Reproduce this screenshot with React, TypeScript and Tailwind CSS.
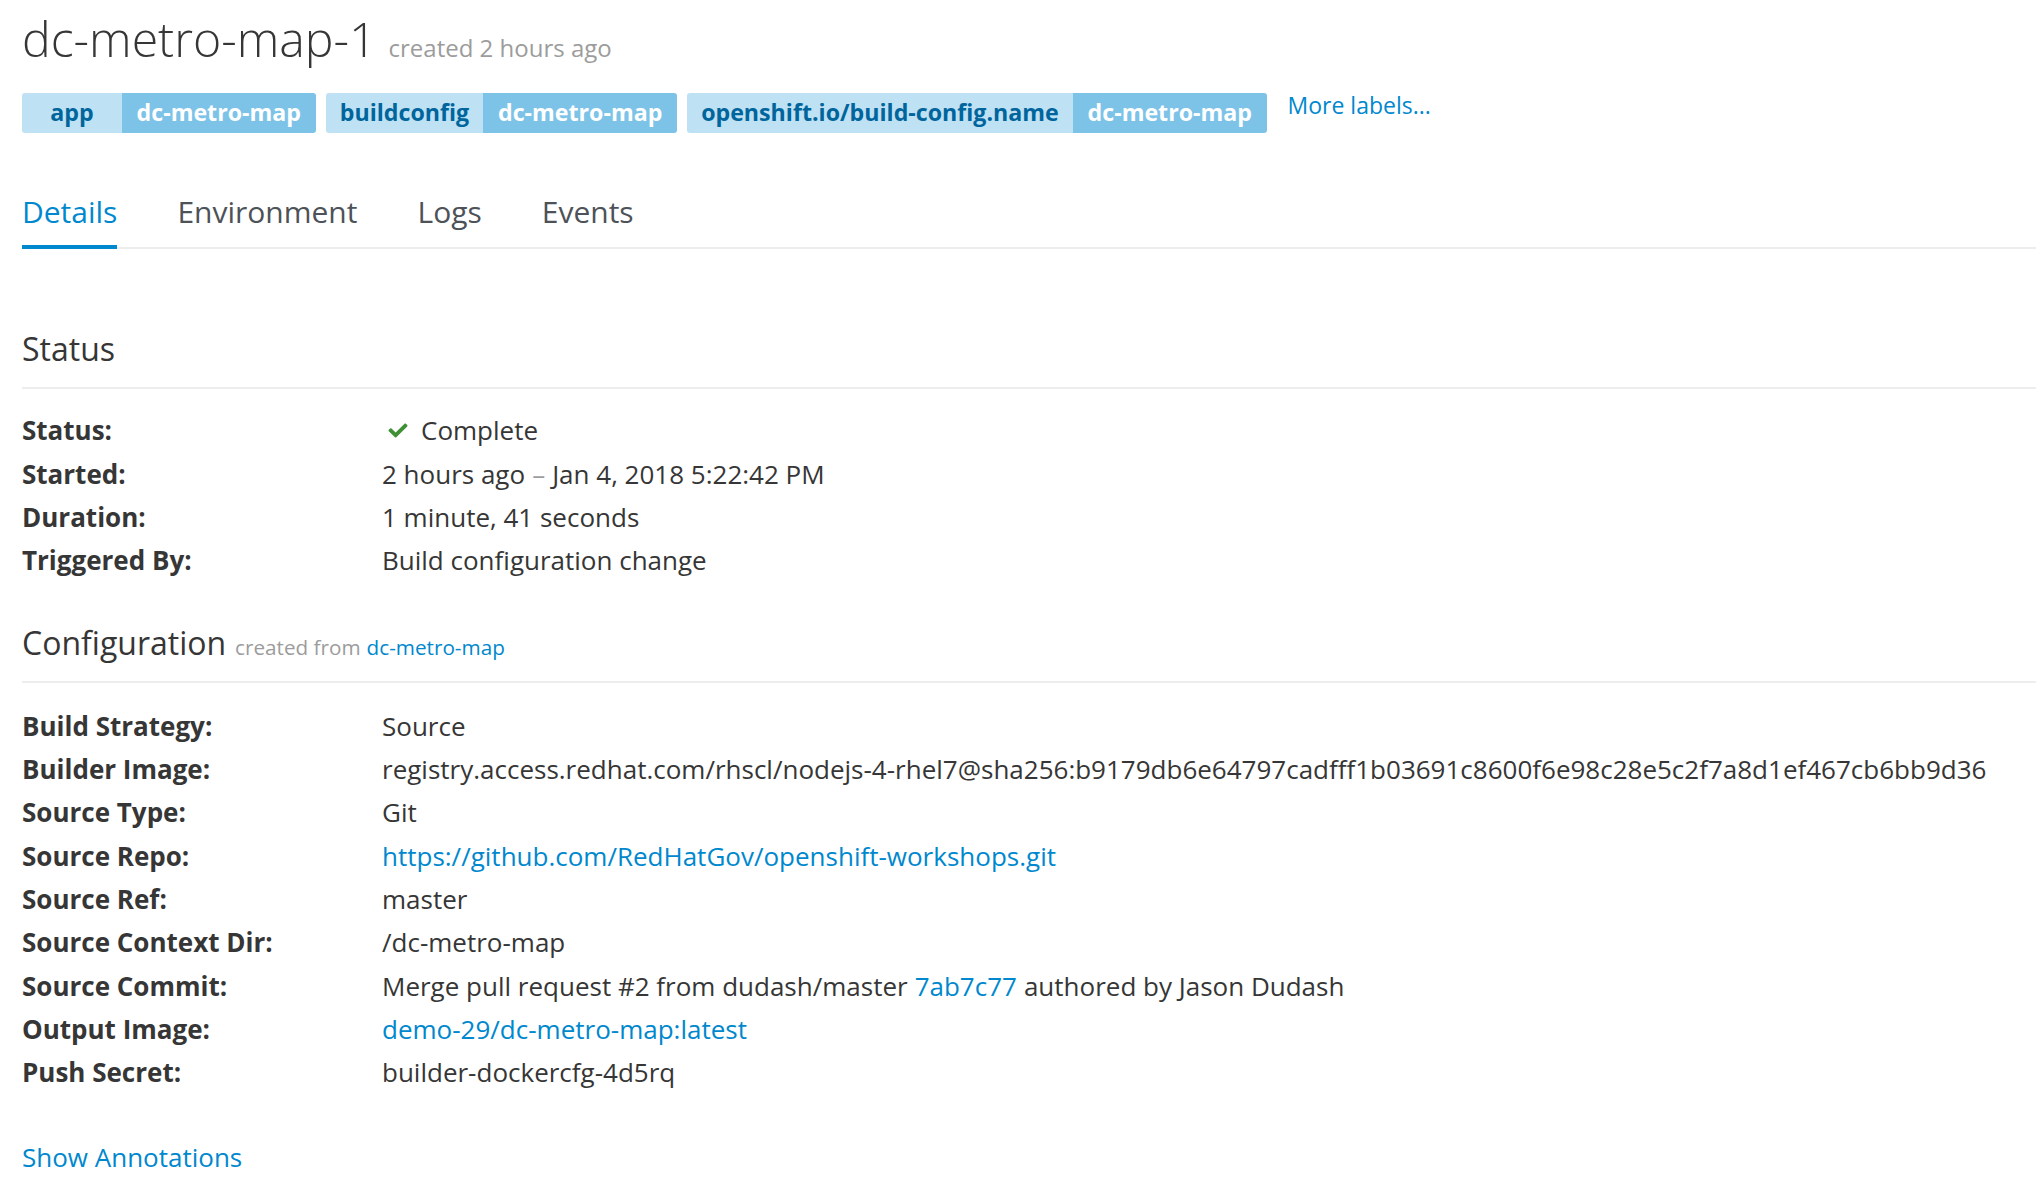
import { FaCheck } from 'react-icons/fa';

const labels = [
  { key: 'app', value: 'dc-metro-map' },
  { key: 'buildconfig', value: 'dc-metro-map' },
  { key: 'openshift.io/build-config.name', value: 'dc-metro-map' },
];

const tabs = ['Details', 'Environment', 'Logs', 'Events'];

function Row({ label, children }: { label: string; children: React.ReactNode }) {
  return (
    <div className="flex h-[43.33px] items-center">
      <div className="w-[360px] shrink-0 font-bold text-[#363636]">{label}</div>
      <div className="flex items-center whitespace-nowrap text-[#363636]">{children}</div>
    </div>
  );
}

function SectionHeading({ children }: { children: React.ReactNode }) {
  return (
    <div className="border-b-2 border-[#ededed] pb-[21px]">
      <h2 className="flex items-baseline text-[32px] leading-[1.1] text-[#363636]">{children}</h2>
    </div>
  );
}

export default function App() {
  return (
    <div
      className="min-h-screen bg-white pl-[22px] pt-[12px] text-[26px] leading-[1.6667]"
      style={{ fontFamily: '"Open Sans", "Liberation Sans", sans-serif' }}
    >
      {/* title */}
      <div className="flex items-baseline gap-[12px]">
        <h1 className="text-[48.2px] font-light leading-[1.1] text-[#363636]">dc-metro-map-1</h1>
        <span className="text-[24px] text-[#9c9c9c]">created 2 hours ago</span>
      </div>

      {/* labels */}
      <div className="mt-[25px] flex items-start gap-[10px]">
        {labels.map((l, i) => (
          <div key={i} className="flex h-[40px] overflow-hidden rounded-[3px] text-[23.2px] font-bold leading-none">
            <span className="flex min-w-[100px] items-center justify-center bg-[#bee1f4] px-[14.2px] text-[#00659c]">
              {l.key}
            </span>
            <span className="flex items-center bg-[#7dc3e8] px-[14.6px] text-white">{l.value}</span>
          </div>
        ))}
        <a className="ml-[11px] mt-[-7px] text-[23px] leading-[1.6667] text-[#0088ce]">More labels...</a>
      </div>

      {/* tabs */}
      <div className="mt-[59px] flex gap-[60px] border-b-2 border-[#ededed]">
        {tabs.map((t, i) => (
          <div
            key={t}
            className={
              i === 0
                ? '-mb-[2px] border-b-4 border-[#0088ce] pb-[13px] text-[30px] leading-[40px] text-[#0088ce]'
                : '-mb-[2px] border-b-4 border-transparent pb-[13px] text-[30px] leading-[40px] text-[#4d5258]'
            }
          >
            {t}
          </div>
        ))}
      </div>

      {/* status */}
      <div className="mt-[82px]">
        <SectionHeading>Status</SectionHeading>
        <div className="mt-[20px]">
          <Row label="Status:">
            <FaCheck className="ml-[5px] mr-[12px] h-[19px] w-[22px] text-[#3f8f35]" />
            Complete
          </Row>
          <Row label="Started:">
            2 hours ago <span className="mx-[7px] text-[#9c9c9c]">–</span> Jan 4, 2018 5:22:42 PM
          </Row>
          <Row label="Duration:">1 minute, 41 seconds</Row>
          <Row label="Triggered By:">Build configuration change</Row>
        </div>
      </div>

      {/* configuration */}
      <div className="mt-[42px]">
        <SectionHeading>
          Configuration
          <span className="ml-[9px] text-[20.7px] text-[#9c9c9c]">created from</span>
          <a className="ml-[6px] text-[20.7px] text-[#0088ce]">dc-metro-map</a>
        </SectionHeading>
        <div className="mt-[22px]">
          <Row label="Build Strategy:">Source</Row>
          <Row label="Builder Image:">
            registry.access.redhat.com/rhscl/nodejs-4-rhel7@sha256:b9179db6e64797cadfff1b03691c8600f6e98c28e5c2f7a8d1ef467cb6bb9d36
          </Row>
          <Row label="Source Type:">Git</Row>
          <Row label="Source Repo:">
            <a className="text-[#0088ce]">https://github.com/RedHatGov/openshift-workshops.git</a>
          </Row>
          <Row label="Source Ref:">master</Row>
          <Row label="Source Context Dir:">/dc-metro-map</Row>
          <Row label="Source Commit:">
            Merge pull request #2 from dudash/master
            <a className="mx-[7px] text-[#0088ce]">7ab7c77</a>
            authored by Jason Dudash
          </Row>
          <Row label="Output Image:">
            <a className="text-[#0088ce]">demo-29/dc-metro-map:latest</a>
          </Row>
          <Row label="Push Secret:">builder-dockercfg-4d5rq</Row>
        </div>
      </div>

      <div className="mt-[41px] pb-[20px]">
        <a className="text-[#0088ce]">Show Annotations</a>
      </div>
    </div>
  );
}
